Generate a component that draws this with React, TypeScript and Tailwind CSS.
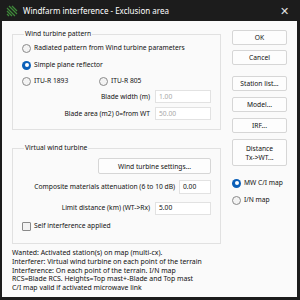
import React from 'react';

const font = { fontFamily: '"Noto Sans", "Open Sans", sans-serif' };

function Radio({ checked, label, className = '' }: { checked?: boolean; label: string; className?: string }) {
  return (
    <label className={`flex items-center gap-[3px] whitespace-nowrap ${className}`}>
      {checked ? (
        <span className="w-[9px] h-[9px] shrink-0 rounded-full bg-[#0a5fb8] flex items-center justify-center">
          <span className="w-[4px] h-[4px] rounded-full bg-white" />
        </span>
      ) : (
        <span className="w-[9px] h-[9px] shrink-0 rounded-full border border-[#8a8a8a] bg-[#f3f3f3]" />
      )}
      <span>{label}</span>
    </label>
  );
}

function Btn({ children, className = '' }: { children: React.ReactNode; className?: string }) {
  return (
    <div className={`flex items-center justify-center text-center leading-[9px] bg-[#fdfdfd] border border-[#d6d6d6] rounded-[2px] ${className}`}>
      {children}
    </div>
  );
}

function Field({ value, muted, className = '' }: { value: string; muted?: boolean; className?: string }) {
  return (
    <div className={`h-[13px] bg-white border border-[#e2e2e2] flex items-center pl-[3px] ${muted ? 'text-[#a8a8a8]' : 'text-[#111]'} ${className}`}>
      {value}
    </div>
  );
}

export default function App() {
  return (
    <div className="w-[300px] h-[300px] bg-[#1c1c1c] flex flex-col pl-[2px] pr-[3px] pb-[3px] text-[6.7px] text-[#111]" style={font}>
      {/* title bar */}
      <div className="h-[21px] flex items-center text-white text-[8px]">
        <svg width="12" height="12" viewBox="0 0 12 12" className="ml-[4px] mr-[5px]">
          <path d="M1 3 L9 11 M1 6 L6 11 M1 9 L3 11 M3 1 L11 9 M6 1 L11 6" stroke="#3f8a3a" strokeWidth="1.2" />
        </svg>
        <span className="flex-1">Windfarm interference - Exclusion area</span>
        <span className="mr-[8px] text-[11px] leading-none text-[#e0e0e0]">✕</span>
      </div>

      {/* body */}
      <div className="flex-1 bg-[#fafafa] flex pl-[10px] pr-[10px] pt-[9px] whitespace-nowrap">
        <div className="w-[209px] flex flex-col">
          <fieldset className="border border-[#e1e1e1] h-[100px] pl-[9px] pr-[9px] pb-0">
            <legend className="ml-[2px] px-[1px] leading-[8px]">Wind turbine pattern</legend>
            <Radio label="Radiated pattern from Wind turbine parameters" className="mt-[5px]" />
            <Radio checked label="Simple plane reflector" className="mt-[7px]" />
            <div className="flex mt-[6px]">
              <Radio label="ITU-R 1893" className="w-[77px]" />
              <Radio label="ITU-R 805" />
            </div>
            <div className="flex items-center justify-end mt-[4px] gap-[5px]">
              <span>Blade width (m)</span>
              <Field value="1.00" muted className="w-[56px]" />
            </div>
            <div className="flex items-center justify-end mt-[4px] gap-[5px]">
              <span>Blade area (m2) 0=from WT</span>
              <Field value="50.00" muted className="w-[56px]" />
            </div>
          </fieldset>

          <fieldset className="border border-[#e1e1e1] h-[100px] mt-[14px] pl-[9px] pr-[9px]">
            <legend className="ml-[2px] px-[1px] leading-[8px]">Virtual wind turbine</legend>
            <div className="flex justify-end mt-[6px]">
              <Btn className="w-[113px] h-[16px]">Wind turbine settings...</Btn>
            </div>
            <div className="flex items-center justify-end mt-[6px] gap-[4px]">
              <span>Composite materials attenuation (6 to 10 dB)</span>
              <Field value="0.00" className="w-[32px] h-[14px]" />
            </div>
            <div className="flex items-center justify-end mt-[8px] gap-[5px]">
              <span>Limit distance (km) (WT-&gt;Rx)</span>
              <Field value="5.00" className="w-[56px]" />
            </div>
            <label className="flex items-center gap-[3px] mt-[6px]">
              <span className="w-[9px] h-[9px] border border-[#8a8a8a] rounded-[1px] bg-[#f3f3f3]" />
              <span>Self interference applied</span>
            </label>
          </fieldset>

          <div className="mt-[5px] text-[6.9px] leading-[8.8px]">
            <div>Wanted: Activated station(s) on map (multi-cx).</div>
            <div>Interferer: Virtual wind turbine on each point of the terrain</div>
            <div>Interference: On each point of the terrain. I/N map</div>
            <div>RCS=Blade RCS. Heights=Top mast+-Blade and Top mast</div>
            <div>C/I map valid if activated microwave link</div>
          </div>
        </div>

        <div className="flex-1 flex flex-col pl-[11px] pt-[0px]">
          <Btn className="h-[15px] border-[#7fb2e6]">OK</Btn>
          <Btn className="h-[15px] mt-[5px]">Cancel</Btn>
          <Btn className="h-[15px] mt-[11px]">Station list...</Btn>
          <Btn className="h-[15px] mt-[6px]">Model...</Btn>
          <Btn className="h-[15px] mt-[6px]">IRF...</Btn>
          <Btn className="h-[27px] mt-[6px]">Distance<br />Tx-&gt;WT...</Btn>
          <Radio checked label="MW C/I map" className="mt-[12px]" />
          <Radio label="I/N map" className="mt-[7px]" />
        </div>
      </div>
    </div>
  );
}
